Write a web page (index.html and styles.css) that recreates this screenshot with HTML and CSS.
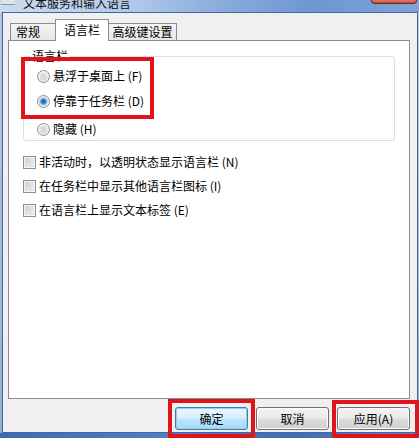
FILE: index.html
```html
<!DOCTYPE html>
<html lang="zh-CN">
<head>
<meta charset="utf-8">
<title>文本服务和输入语言</title>
<link rel="stylesheet" href="styles.css">
</head>
<body>
<div class="window">
  <div class="titlebar">
    <span class="app-icon"></span>
    <span class="title">文本服务和输入语言</span>
    <span class="close"></span>
  </div>
  <div class="client">
    <div class="tabs">
      <div class="tab tab-general">常规</div>
      <div class="tab tab-active">语言栏</div>
      <div class="tab tab-adv">高级键设置</div>
    </div>
    <div class="panel">
      <fieldset class="group">
        <legend class="group-title">语言栏</legend>
        <div class="opts">
          <div class="opt opt-first"><span class="radio"></span><span>悬浮于桌面上 (F)</span></div>
          <div class="opt opt-second"><span class="radio radio-on"></span><span>停靠于任务栏 (D)</span></div>
          <div class="opt opt-third"><span class="radio"></span><span>隐藏 (H)</span></div>
        </div>
      </fieldset>
      <div class="checks">
        <div class="opt"><span class="check"></span><span>非活动时，以透明状态显示语言栏 (N)</span></div>
        <div class="opt"><span class="check"></span><span>在任务栏中显示其他语言栏图标 (I)</span></div>
        <div class="opt"><span class="check"></span><span>在语言栏上显示文本标签 (E)</span></div>
      </div>
    </div>
    <div class="buttons">
      <button class="btn btn-default">确定</button>
      <button class="btn">取消</button>
      <button class="btn">应用(A)</button>
    </div>
  </div>
  <div class="frame-bottom"></div>
  <div class="mark mark-dock"></div>
  <div class="mark mark-ok"></div>
  <div class="mark mark-apply"></div>
</div>
</body>
</html>
```
FILE: styles.css
```css
html, body {
  margin: 0;
  padding: 0;
}
body {
  font-family: "Noto Sans CJK SC", "Noto Sans", sans-serif;
  font-size: 12px;
  color: #000;
  background: #fff;
}
.window {
  position: relative;
  width: 419px;
  height: 438px;
  overflow: hidden;
  background: linear-gradient(to bottom, #b4cae6, #8fb0dc);
}
.titlebar {
  display: flex;
  align-items: flex-start;
  height: 12px;
  overflow: hidden;
  background: linear-gradient(to right, #c8dbef 0%, #b3cbea 30%, #86a9da 55%, #6d97d2 75%, #7ea3d8 100%);
}
.app-icon {
  width: 14px;
  height: 4px;
  margin-left: 1px;
  background: #dfe3e8;
  border-bottom: 1px solid #8c97a5;
}
.title {
  margin-left: 8px;
  margin-top: -4px;
  line-height: 14px;
  font-size: 12px;
  color: #111;
  white-space: nowrap;
}
.close {
  margin-left: auto;
  margin-right: 2px;
  width: 44px;
  height: 3px;
  background: linear-gradient(#d8806c, #c24a36);
  border: 1px solid #6e2a20;
  border-top: none;
  border-radius: 0 0 4px 4px;
}
.client {
  box-sizing: border-box;
  height: 421px;
  margin: 0 1px 0 2px;
  background: #f0f0f0;
  border: 1px solid #44669a;
  padding: 6px 7px 0 0;
}
.tabs {
  display: flex;
  align-items: flex-end;
  height: 21px;
  padding-left: 7px;
}
.tab {
  box-sizing: border-box;
  height: 17px;
  line-height: 15px;
  border: 1px solid #898c95;
  border-bottom: none;
  background: linear-gradient(#f4f4f4, #e6e6e6);
  text-align: center;
  white-space: nowrap;
}
.tab-general {
  width: 46px;
  text-align: left;
  padding-left: 5px;
}
.tab-active {
  position: relative;
  z-index: 1;
  width: 54px;
  height: 22px;
  line-height: 20px;
  margin-left: -1px;
  margin-bottom: -1px;
  background: #fff;
}
.tab-adv {
  width: 69px;
  margin-left: -1px;
}
.panel {
  box-sizing: border-box;
  width: 402px;
  height: 359px;
  margin-left: 5px;
  background: #fff;
  border: 1px solid #898c95;
}
.group {
  box-sizing: border-box;
  width: 372px;
  margin: 8px 0 0 14px;
  padding: 0 0 3px 6px;
  border: 1px solid #d5dfe5;
  border-radius: 3px;
}
.group-title {
  padding: 0 2px;
  line-height: 14px;
  font-size: 12px;
}
.opts {
  display: flex;
  flex-direction: column;
  padding-left: 7px;
}
.opt {
  display: flex;
  align-items: center;
  gap: 3px;
  height: 16px;
  line-height: 16px;
  white-space: nowrap;
}
.opt-first {
  margin-top: 5px;
}
.opt-second {
  margin-top: 9px;
}
.opt-third {
  margin-top: 12px;
}
.radio {
  box-sizing: border-box;
  flex: none;
  width: 13px;
  height: 13px;
  border-radius: 50%;
  border: 1px solid #8b8f94;
  background: radial-gradient(circle at 50% 55%, #cfd1d4 0, #dcdee0 3px, #eef0f1 5px, #fafafa 6px);
}
.radio-on {
  background: radial-gradient(circle at 50% 50%, #1b4f9c 0, #2d6fc4 1.5px, #5a9be4 2.6px, #8fc0f0 3.4px, #d6dade 4.2px, #eceeef 5px, #fafafa 6px);
}
.checks {
  display: flex;
  flex-direction: column;
  gap: 8px;
  margin: 13px 0 0 14px;
}
.check {
  box-sizing: border-box;
  flex: none;
  width: 13px;
  height: 13px;
  border: 1px solid #8f8f8f;
  background: linear-gradient(135deg, #cdcfd2, #eef0f1);
  box-shadow: inset 0 0 0 1px #f6f6f6;
}
.buttons {
  display: flex;
  justify-content: flex-end;
  gap: 8px;
  margin-top: 8px;
}
.btn {
  box-sizing: border-box;
  width: 73px;
  height: 23px;
  padding: 0;
  font-family: "Noto Sans CJK SC", "Noto Sans", sans-serif;
  font-size: 12px;
  color: #000;
  border: 1px solid #707070;
  border-radius: 3px;
  background: linear-gradient(#f3f3f3 0%, #ebebeb 48%, #dddddd 52%, #cfcfcf 100%);
  box-shadow: inset 0 0 0 1px #fbfbfb;
}
.btn-default {
  border-color: #3c7fb1;
  background: linear-gradient(#eaf6fd 0%, #d9f0fc 48%, #bee6fd 52%, #a7d9f5 100%);
  box-shadow: inset 0 0 0 1px #8fd2f6;
}
.frame-bottom {
  height: 5px;
  background: linear-gradient(to right, #3d6bb0, #4f80c4 40%, #3f6db2 70%, #5585c6);
}
.mark {
  position: absolute;
  box-sizing: border-box;
  border: 4px solid #e1141c;
}
.mark-dock {
  left: 21px;
  top: 57px;
  width: 133px;
  height: 62px;
}
.mark-ok {
  left: 168px;
  top: 399px;
  width: 87px;
  height: 39px;
}
.mark-apply {
  left: 332px;
  top: 400px;
  width: 87px;
  height: 38px;
}
```
